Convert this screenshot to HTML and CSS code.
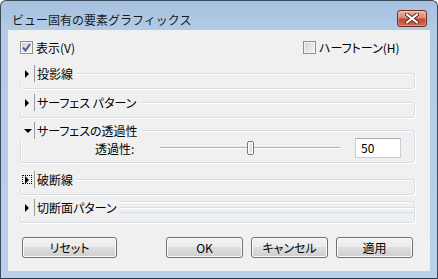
FILE: index.html
```html
<!DOCTYPE html>
<html lang="ja">
<head>
  <meta charset="UTF-8">
  <title>ビュー固有の要素グラフィックス</title>
  <link rel="stylesheet" href="styles.css">
</head>
<body>
  <div class="window">
    <div class="titlebar">
      <span class="title">ビュー固有の要素グラフィックス</span>
      <div class="close">
        <svg width="14" height="11" viewBox="0 0 14 11">
          <path d="M2 1.5 L12 9.5 M12 1.5 L2 9.5" stroke="#5a2a24" stroke-width="4" stroke-linecap="round"/>
          <path d="M2 1.5 L12 9.5 M12 1.5 L2 9.5" stroke="#ffffff" stroke-width="2.2" stroke-linecap="round"/>
        </svg>
      </div>
    </div>

    <div class="client">
      <div class="top-row">
        <label class="check">
          <span class="box">
            <svg width="9" height="9" viewBox="0 0 9 9">
              <path d="M1 4.5 L3.5 7.5 L8 1" fill="none" stroke="#4a5f9c" stroke-width="2"/>
            </svg>
          </span>
          表示(V)
        </label>
        <label class="check">
          <span class="box"></span>
          ハーフトーン(H)
        </label>
      </div>

      <div class="group g1">
        <div class="group-head">
          <span class="slot"><span class="arrow-right"></span></span>
          <span class="sep"></span>
          <span class="head-text">投影線</span>
        </div>
      </div>

      <div class="group g2">
        <div class="group-head">
          <span class="slot"><span class="arrow-right"></span></span>
          <span class="sep"></span>
          <span class="head-text">サーフェス パターン</span>
        </div>
      </div>

      <div class="group g3">
        <div class="group-head">
          <span class="slot"><span class="arrow-down"></span></span>
          <span class="sep"></span>
          <span class="head-text">サーフェスの透過性</span>
        </div>
        <div class="field-row">
          <span class="field-label">透過性:</span>
          <div class="slider"><span class="thumb"></span></div>
          <div class="textbox">50</div>
        </div>
      </div>

      <div class="group g4">
        <div class="group-head">
          <span class="slot"><span class="focus"><span class="arrow-right"></span></span></span>
          <span class="sep"></span>
          <span class="head-text">破断線</span>
        </div>
      </div>

      <div class="group g5">
        <div class="group-head">
          <span class="slot"><span class="arrow-right"></span></span>
          <span class="sep"></span>
          <span class="head-text">切断面パターン</span>
        </div>
      </div>

      <div class="buttons">
        <button class="btn btn-reset">リセット</button>
        <button class="btn">OK</button>
        <button class="btn">キャンセル</button>
        <button class="btn">適用</button>
      </div>
    </div>
  </div>
</body>
</html>
```

FILE: styles.css
```css
* {
  box-sizing: border-box;
}
body {
  margin: 0;
  background: #ffffff;
  font-family: "Noto Sans CJK JP", "Liberation Sans", sans-serif;
  font-size: 12px;
  color: #000;
}
.window {
  width: 438px;
  height: 279px;
  border: 1px solid #3b4b5e;
  border-bottom-color: #25394a;
  border-radius: 6px 6px 0 0;
  background: linear-gradient(#a6c1df, #b3cbe6 30px, #b9d1ea);
  display: flex;
  flex-direction: column;
  overflow: hidden;
}
.titlebar {
  height: 29px;
  display: flex;
  justify-content: space-between;
  align-items: flex-start;
}
.title {
  padding: 11px 0 0 11px;
  line-height: 16px;
  color: #1a1a1a;
}
.close {
  width: 30px;
  height: 17px;
  margin: 9px 10px 0 0;
  border: 1px solid #6a2c25;
  border-radius: 3px;
  background: linear-gradient(#eab0a3, #d98572 48%, #c4462f 52%, #d06c50);
  box-shadow: inset 0 0 0 1px rgba(255, 255, 255, 0.3);
  display: flex;
  align-items: center;
  justify-content: center;
}
.client {
  margin: 0 7px;
  height: 241px;
  background: #f0f0f0;
  display: flex;
  flex-direction: column;
  font-feature-settings: "palt";
}

/* checkboxes */
.top-row {
  display: grid;
  grid-template-columns: 283px auto;
  padding: 11px 0 0 12px;
  height: 24px;
}
.check {
  display: flex;
  align-items: center;
  height: 13px;
  gap: 3px;
  line-height: 13px;
}
.box {
  width: 13px;
  height: 13px;
  border: 1px solid #8e8f8f;
  background: linear-gradient(135deg, #cfcfcf, #f7f7f7);
  box-shadow: inset 0 0 0 1px #f4f4f4;
  display: flex;
  align-items: center;
  justify-content: center;
}

/* collapsible group boxes */
.group {
  margin: 0 15px 0 12px;
  border: 1px solid #d5dfe5;
  border-radius: 3px;
  box-shadow: inset 1px 1px 0 #fff, 1px 1px 0 #fff;
  padding-bottom: 6px;
}
.g1 { margin-top: 19px; }
.g2 { margin-top: 13px; }
.g3 { margin-top: 12px; padding-bottom: 4px; }
.g4 { margin-top: 16px; }
.g5 {
  margin-top: 6px;
  background: linear-gradient(transparent 5px, #d5dfe5 5px, #d5dfe5 6px, #fff 6px, #fff 7px, transparent 7px,
    transparent 10px, #d5dfe5 10px, #d5dfe5 11px, transparent 11px);
}
.group-head {
  display: flex;
  align-items: center;
  height: 17px;
  margin: -9px 0 0 -1px;
  padding-right: 3px;
  background: #f0f0f0;
  width: max-content;
}
.g5 .group-head {
  margin-top: -3px;
}
.slot {
  width: 14px;
  height: 17px;
  display: flex;
  align-items: center;
  justify-content: center;
}
.arrow-right {
  width: 0;
  height: 0;
  border-left: 4px solid #000;
  border-top: 4px solid transparent;
  border-bottom: 4px solid transparent;
}
.arrow-down {
  width: 0;
  height: 0;
  margin-left: 1px;
  border-top: 4px solid #000;
  border-left: 4px solid transparent;
  border-right: 4px solid transparent;
}
.focus {
  width: 10px;
  height: 9px;
  border: 1px dotted #000;
  display: flex;
  align-items: center;
  justify-content: center;
}
.sep {
  width: 1px;
  height: 17px;
  background: #9a9a9a;
}
.head-text {
  margin-left: 2px;
  line-height: 17px;
}

/* transparency row */
.field-row {
  display: flex;
  align-items: center;
  height: 20px;
  margin-top: -1px;
  padding-left: 74px;
}
.field-label {
  width: 65px;
}
.slider {
  width: 180px;
  height: 14px;
  display: flex;
  align-items: center;
  background: linear-gradient(#f0f0f0 6px, #b0b0b0 6px, #b0b0b0 7px, #ffffff 7px, #ffffff 8px, #f0f0f0 8px);
}
.thumb {
  width: 7px;
  height: 14px;
  margin-left: 87px;
  border: 1px solid #7a7a7a;
  border-radius: 2px;
  background: linear-gradient(90deg, #f4f4f4, #dcdcdc);
  box-shadow: inset 0 0 0 1px #fff;
}
.textbox {
  width: 46px;
  height: 20px;
  margin-left: 15px;
  padding-left: 5px;
  border: 1px solid #c9ccd2;
  border-top-color: #a9abb1;
  background: #fff;
  line-height: 18px;
}

/* buttons */
.buttons {
  display: flex;
  margin-top: 14px;
  padding-left: 14px;
  gap: 8px;
}
.btn {
  width: 77px;
  height: 21px;
  padding: 0;
  font: inherit;
  font-feature-settings: "palt";
  color: #000;
  border: 1px solid #707070;
  border-radius: 3px;
  background: linear-gradient(#f2f2f2, #ebebeb 50%, #dddddd 50%, #cfcfcf);
  box-shadow: inset 0 0 0 1px #fcfcfc;
}
.btn-reset {
  width: 95px;
  margin-right: 41px;
}
```
